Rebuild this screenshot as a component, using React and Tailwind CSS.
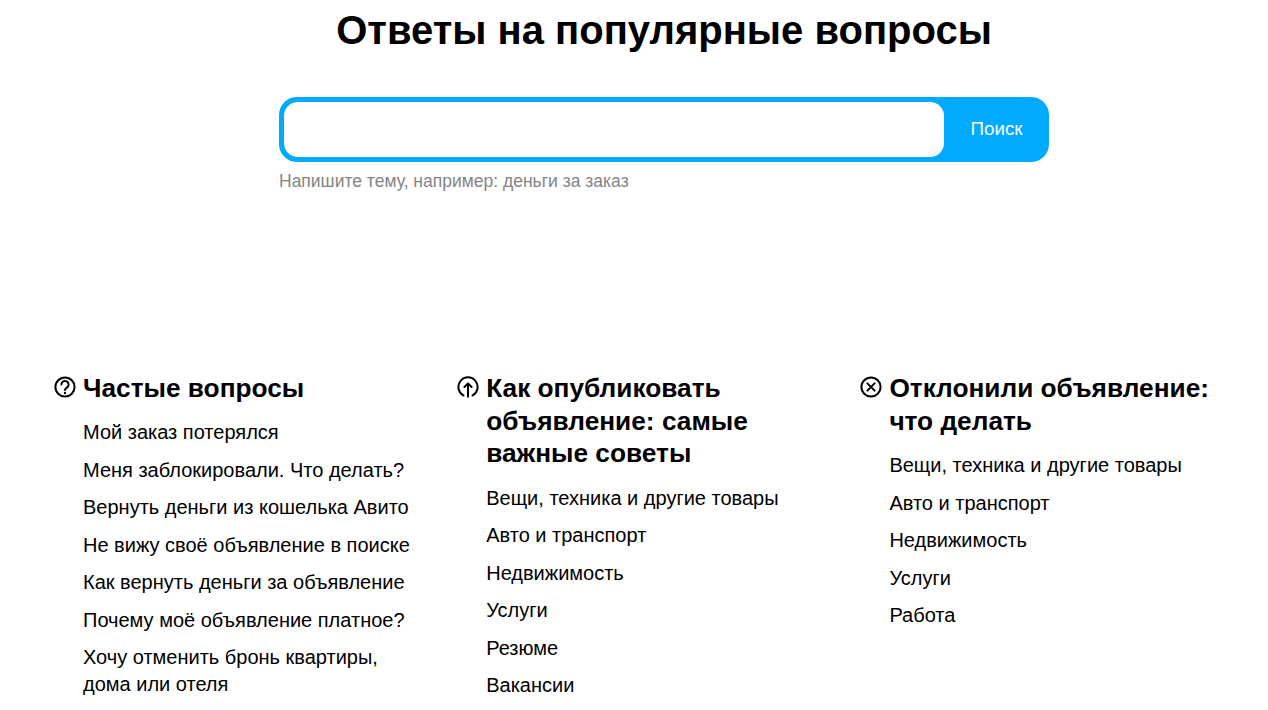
function QuestionIcon() {
  return (
    <svg width="22" height="22" viewBox="0 0 22 22" fill="none" stroke="#000" strokeWidth="2" strokeLinecap="round">
      <circle cx="11" cy="11" r="9.6" />
      <path d="M7.4 8.6a3.6 3.6 0 1 1 5.5 3c-1.3.8-1.9 1.2-1.9 2.4" />
      <circle cx="11" cy="17" r="0.6" fill="#000" strokeWidth="1.2" />
    </svg>
  );
}
function UpIcon() {
  return (
    <svg width="22" height="22" viewBox="0 0 22 22" fill="none" stroke="#000" strokeWidth="2" strokeLinecap="round" strokeLinejoin="round">
      <path d="M6.4 19.4A9.6 9.6 0 1 1 15.6 19.4" />
      <path d="M11 20.8V7.4M7.4 11 11 7.4l3.6 3.6" />
    </svg>
  );
}
function XIcon() {
  return (
    <svg width="22" height="22" viewBox="0 0 22 22" fill="none" stroke="#000" strokeWidth="2" strokeLinecap="round">
      <circle cx="11" cy="11" r="9.6" />
      <path d="M7.4 7.4l7.2 7.2M14.6 7.4l-7.2 7.2" />
    </svg>
  );
}
function Column({ icon, title, items }) {
  return (
    <div className="w-[403.2px] shrink-0 flex items-start">
      <div className="w-[29px] shrink-0 pt-[4px] -ml-[0.5px] mr-[0.5px]">{icon}</div>
      <div className="flex-1 pr-[40px]">
        <h2 className="text-[26.25px] leading-[32.7px] font-bold text-black">{title}</h2>
        <ul className="mt-[14.7px] flex flex-col gap-[10.5px]">
          {items.map((t) => (
            <li key={t} className="text-[20px] leading-[27px] text-black">{t}</li>
          ))}
        </ul>
      </div>
    </div>
  );
}
export default function App() {
  return (
    <div className="w-[1268px] h-[710px] overflow-hidden bg-white font-['Liberation_Sans',Arial,sans-serif]">
      <h1 className="pt-[7.5px] text-center text-[40px] leading-[44px] font-bold text-black pl-[60px]">Ответы на популярные вопросы</h1>
      <div className="mt-[45.5px] ml-[279px] w-[770px]">
        <div className="h-[65px] flex rounded-[18px] bg-[#00aaff] p-[5px] pr-0">
          <div className="w-[660px] bg-white rounded-[14px]" />
          <div className="flex-1 flex items-center justify-center text-white text-[18.75px]">Поиск</div>
        </div>
        <p className="mt-[8px] text-[17.5px] leading-[22px] text-[#858585]">Напишите тему, например: деньги за заказ</p>
      </div>
      <div className="mt-[180px] pl-[54px] flex">
        <Column icon={<QuestionIcon />} title="Частые вопросы" items={["Мой заказ потерялся", "Меня заблокировали. Что делать?", "Вернуть деньги из кошелька Авито", "Не вижу своё объявление в поиске", "Как вернуть деньги за объявление", "Почему моё объявление платное?", "Хочу отменить бронь квартиры, дома или отеля"]} />
        <Column icon={<UpIcon />} title="Как опубликовать объявление: самые важные советы" items={["Вещи, техника и другие товары", "Авто и транспорт", "Недвижимость", "Услуги", "Резюме", "Вакансии"]} />
        <Column icon={<XIcon />} title="Отклонили объявление: что делать" items={["Вещи, техника и другие товары", "Авто и транспорт", "Недвижимость", "Услуги", "Работа"]} />
      </div>
    </div>
  );
}
